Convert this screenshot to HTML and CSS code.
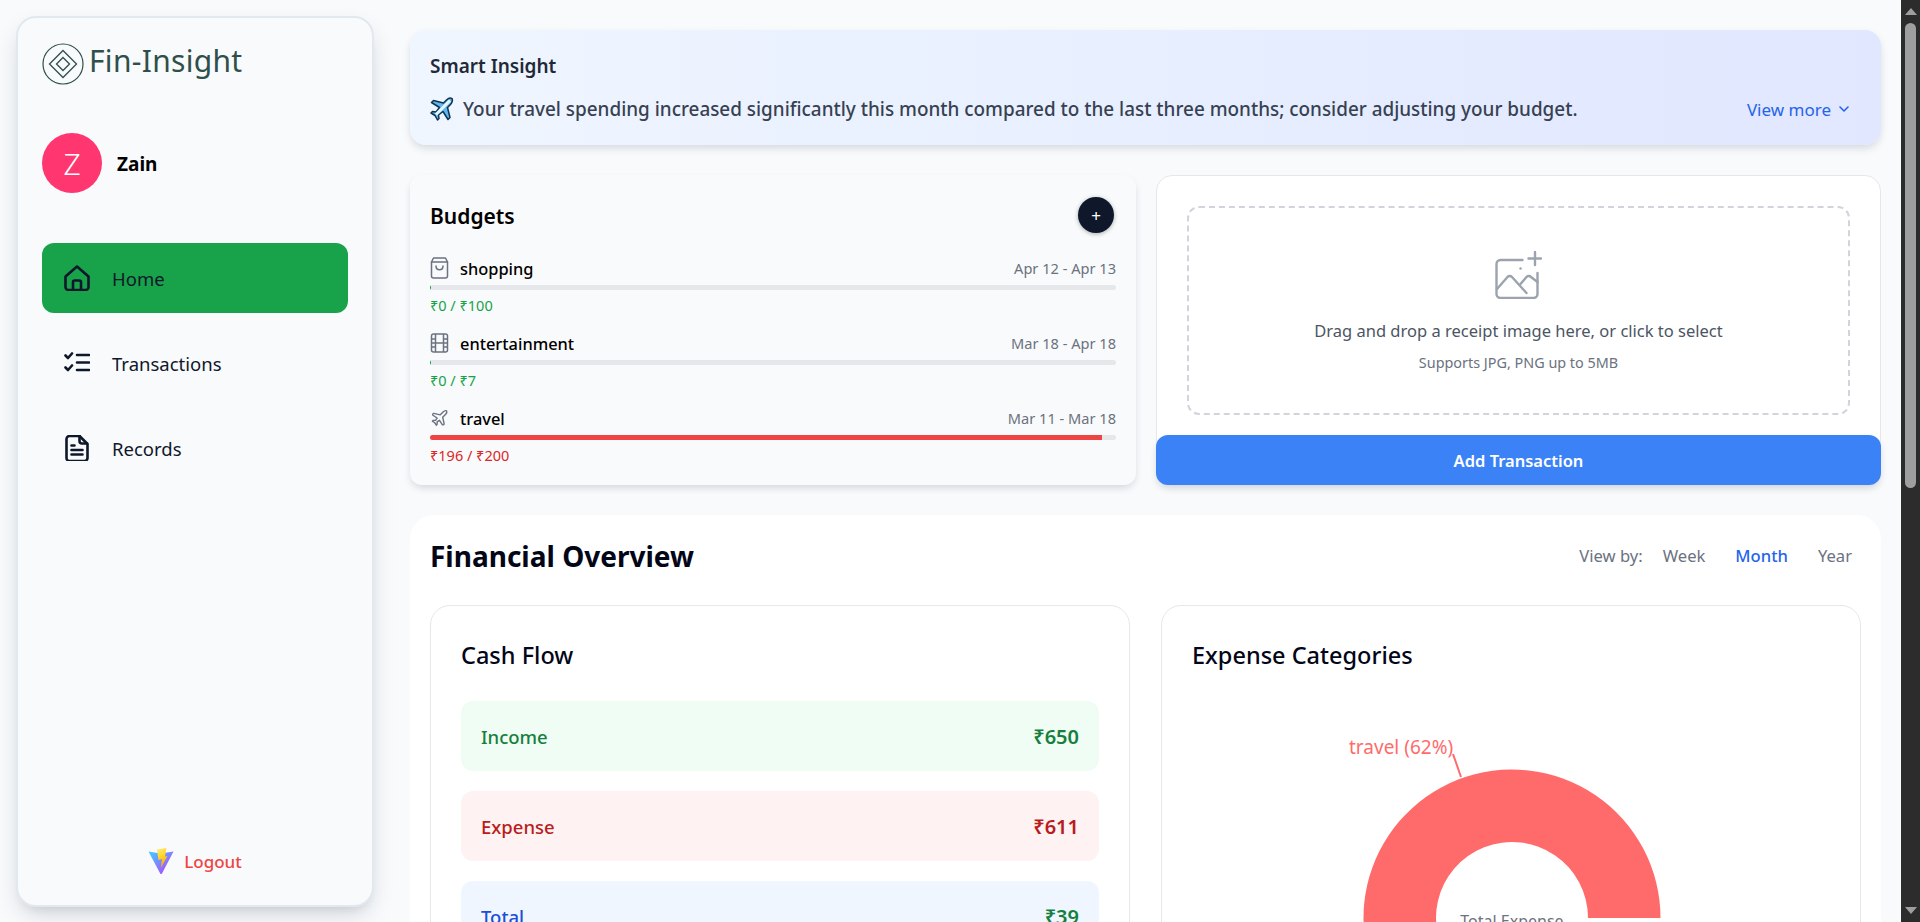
FILE: index.html
```html
<!DOCTYPE html>
<html lang="en">
<head>
    <meta charset="UTF-8">
    <meta name="viewport" content="width=device-width, initial-scale=1.0">
    <title>Fin-Insight</title>
    <link rel="stylesheet" href="styles.css">
</head>
<body>
    <aside class="sidebar">
        <div class="brand">
            <svg class="brand-mark" viewBox="0 0 42 42" fill="none" stroke="#2f4f4a">
                <circle cx="21" cy="21" r="20" stroke-width="1.2"/>
                <path d="M21 7.5 34.5 21 21 34.5 7.5 21Z" stroke-width="1.3"/>
                <path d="M21 14.5 27.5 21 21 27.5 14.5 21Z" stroke-width="1.3"/>
            </svg>
            <span class="brand-name">Fin-Insight</span>
        </div>

        <div class="profile">
            <div class="avatar">Z</div>
            <span class="profile-name">Zain</span>
        </div>

        <nav class="nav">
            <a class="nav-item active">
                <svg class="nav-icon" viewBox="0 0 26 26" fill="none" stroke="#0f172a" stroke-width="2.6" stroke-linejoin="round" stroke-linecap="round">
                    <path d="M1.5 11.5 13 1.5l11.500 10v10.500a3 3 0 0 1-3 3h-17a3 3 0 0 1-3-3Z"/>
                    <path d="M9 25v-8a1.500 1.500 0 0 1 1.500-1.500h5A1.500 1.500 0 0 1 17 17v8"/>
                </svg>
                <span>Home</span>
            </a>
            <a class="nav-item">
                <svg class="nav-icon" viewBox="0 0 26 26" fill="none" stroke="#0f172a" stroke-width="2.6" stroke-linecap="round" stroke-linejoin="round">
                    <path d="M1.500 5.500 4 8l4-4.500"/>
                    <path d="M1.500 17.500 4 20l4-4.500"/>
                    <path d="M13 5h12M13 12.500h12M13 20h12"/>
                </svg>
                <span>Transactions</span>
            </a>
            <a class="nav-item">
                <svg class="nav-icon" viewBox="0 0 26 26" fill="none" stroke="#0f172a" stroke-width="2.6" stroke-linecap="round" stroke-linejoin="round">
                    <path d="M5.500 0.500h10l8 8v14a3 3 0 0 1-3 3h-15a3 3 0 0 1-3-3v-19a3 3 0 0 1 3-3Z" transform="translate(0 0.500)"/>
                    <path d="M15.500 1v5a2.500 2.500 0 0 0 2.500 2.500h5"/>
                    <path d="M7.500 10.500h3M7.500 15h11M7.500 19.500h11"/>
                </svg>
                <span>Records</span>
            </a>
        </nav>

        <a class="logout">
            <svg class="logout-icon" viewBox="0 0 26 26">
                <defs>
                    <linearGradient id="viteBody" x1="0" y1="0" x2="1" y2="1">
                        <stop offset="0" stop-color="#41d1ff"/>
                        <stop offset="1" stop-color="#bd34fe"/>
                    </linearGradient>
                    <linearGradient id="viteBolt" x1="0" y1="0" x2="0.3" y2="1">
                        <stop offset="0" stop-color="#ffea83"/>
                        <stop offset="0.4" stop-color="#ffdd35"/>
                        <stop offset="1" stop-color="#ffa800"/>
                    </linearGradient>
                </defs>
                <path d="M0.500 3.500 12.500 5.500 25.500 3.500 14 25.500a1 1 0 0 1-1.800 0Z" fill="url(#viteBody)"/>
                <path d="M9 1.500 18.500 0 17 8.500 19.500 8 12.800 20 14 11 10.500 12Z" fill="url(#viteBolt)"/>
            </svg>
            <span>Logout</span>
        </a>
    </aside>

    <main class="content">
        <section class="insight">
            <h3 class="insight-title">Smart Insight</h3>
            <div class="insight-row">
                <svg class="insight-emoji" viewBox="0 0 24 24">
                    <path d="M22 1.500c-1.500-1-4 0-5.500 1.500L13.500 6 3.500 3.500 1.500 5.500 9.500 10.500 6 15 2.500 14.500 1 16l4 2.500L7.500 23 9 21.500 8.500 18l4.500-3.500 5 8 2-2L17.500 10.500l3-3C22 6 23 3 22 1.500Z" fill="#5db7ee" stroke="#11334f" stroke-width="1.500" stroke-linejoin="round"/>
                    <path d="M20 3.500 6 17.500" stroke="#eaf6ff" stroke-width="3"/>
                </svg>
                <p class="insight-text">Your travel spending increased significantly this month compared to the last three months; consider adjusting your budget.</p>
                <a class="view-more">View more
                    <svg class="view-more-icon" viewBox="0 0 12 12" fill="none" stroke="#2563eb" stroke-width="1.600" stroke-linecap="round" stroke-linejoin="round"><path d="M2 4l4 4 4-4"/></svg>
                </a>
            </div>
        </section>

        <div class="top-grid">
            <section class="budgets">
                <div class="budgets-head">
                    <h3 class="budgets-title">Budgets</h3>
                    <button class="add-budget">+</button>
                </div>

                <div class="budget">
                    <div class="budget-row">
                        <svg class="budget-icon" viewBox="0 0 18 22" fill="none" stroke="#6b7280" stroke-width="1.500" stroke-linecap="round" stroke-linejoin="round">
                            <path d="M3 1h12l2 4v14a2 2 0 0 1-2 2H3a2 2 0 0 1-2-2V5Z"/>
                            <path d="M1 5h16"/>
                            <path d="M5.500 9c0 5 7 5 7 0"/>
                        </svg>
                        <span class="budget-name">shopping</span>
                        <span class="budget-date">Apr 12 - Apr 13</span>
                    </div>
                    <div class="bar"><div class="bar-fill green" style="width: 0.2%"></div></div>
                    <p class="budget-money green-text">₹0 / ₹100</p>
                </div>

                <div class="budget">
                    <div class="budget-row">
                        <svg class="budget-icon" viewBox="0 0 18 22" fill="none" stroke="#6b7280" stroke-width="1.500" stroke-linejoin="round">
                            <rect x="1" y="2" width="16" height="18" rx="2"/>
                            <path d="M5 2v18M13 2v18M1 7h4M1 11h16M1 15h4M13 7h4M13 15h4"/>
                        </svg>
                        <span class="budget-name">entertainment</span>
                        <span class="budget-date">Mar 18 - Apr 18</span>
                    </div>
                    <div class="bar"><div class="bar-fill green" style="width: 0.2%"></div></div>
                    <p class="budget-money green-text">₹0 / ₹7</p>
                </div>

                <div class="budget">
                    <div class="budget-row">
                        <svg class="budget-icon" viewBox="0 0 24 24" fill="none" stroke="#6b7280" stroke-width="1.800" stroke-linecap="round" stroke-linejoin="round">
                            <path d="M17.800 19.200 16 11l3.500-3.500C21 6 21.500 4 21 3c-1-.5-3 0-4.500 1.500L13 8 4.800 6.200c-.5-.1-.9.100-1.100.5l-.3.5c-.2.5-.1 1 .3 1.300L9 12l-2 3H4l-1 1 3 2 2 3 1-1v-3l3-2 3.500 5.300c.3.400.8.500 1.300.3l.5-.2c.4-.3.6-.7.5-1.200z"/>
                        </svg>
                        <span class="budget-name">travel</span>
                        <span class="budget-date">Mar 11 - Mar 18</span>
                    </div>
                    <div class="bar"><div class="bar-fill red" style="width: 98%"></div></div>
                    <p class="budget-money red-text">₹196 / ₹200</p>
                </div>
            </section>

            <section class="upload">
                <div class="dropzone">
                    <svg class="dropzone-icon" viewBox="0 0 46 48" fill="none" stroke="#9ca3af" stroke-width="2.400" stroke-linecap="round" stroke-linejoin="round">
                        <path d="M27 9H5a4 4 0 0 0-4 4v30a4 4 0 0 0 4 4h33a4 4 0 0 0 4-4V22"/>
                        <path d="M1.500 38 12 26a3 3 0 0 1 4.500 0L31 42"/>
                        <path d="M25 33l6-7a3 3 0 0 1 4.500 0L42 31"/>
                        <path d="M39.500 1v13M33 7.500h12.500"/>
                        <path d="M25 17.500h.1"/>
                    </svg>
                    <p class="dropzone-text">Drag and drop a receipt image here, or click to select</p>
                    <p class="dropzone-note">Supports JPG, PNG up to 5MB</p>
                </div>
                <button class="add-transaction">Add Transaction</button>
            </section>
        </div>

        <section class="overview">
            <div class="overview-head">
                <h2 class="overview-title">Financial Overview</h2>
                <div class="view-by">
                    <span class="view-label">View by:</span>
                    <button class="view-btn">Week</button>
                    <button class="view-btn selected">Month</button>
                    <button class="view-btn">Year</button>
                </div>
            </div>

            <div class="overview-grid">
                <div class="panel">
                    <h3 class="panel-title">Cash Flow</h3>
                    <div class="flow-list">
                        <div class="flow income"><span>Income</span><strong>₹650</strong></div>
                        <div class="flow expense"><span>Expense</span><strong>₹611</strong></div>
                        <div class="flow total"><span>Total</span><strong>₹39</strong></div>
                    </div>
                </div>

                <div class="panel">
                    <h3 class="panel-title">Expense Categories</h3>
                    <svg class="donut" viewBox="0 0 638 440">
                        <path d="M468.500 217A148.500 148.500 0 1 0 211.400 318.300L264.400 268.800A76 76 0 1 1 396 217Z" fill="#ff6b6b"/>
                        <path d="M261 53 269 76" stroke="#ff6b6b" stroke-width="2" fill="none"/>
                        <text class="donut-label" x="157" y="53">travel (62%)</text>
                        <text class="donut-center" x="320" y="226" text-anchor="middle">Total Expense</text>
                        <text class="donut-value" x="320" y="252" text-anchor="middle">₹611</text>
                    </svg>
                </div>
            </div>
        </section>
    </main>

    <div class="scrollbar">
        <span class="scroll-up"></span>
        <span class="scroll-thumb"></span>
        <span class="scroll-down"></span>
    </div>
</body>
</html>
```

FILE: styles.css
```css
* {
    box-sizing: border-box;
}

html {
    background: #f8fafc;
}

body {
    margin: 0;
    padding-right: 19px;
    display: flex;
    align-items: flex-start;
    font-family: "Noto Sans", sans-serif;
    color: #0f172a;
    background: #f8fafc;
}

/* browser scrollbar, the headless window does not paint one */
.scrollbar {
    position: fixed;
    top: 0;
    right: 0;
    bottom: 0;
    width: 19px;
    display: flex;
    flex-direction: column;
    align-items: center;
    background: #2c2c2c;
}

.scroll-up {
    margin-top: 8px;
    border-left: 6px solid transparent;
    border-right: 6px solid transparent;
    border-bottom: 7px solid #9f9f9f;
}

.scroll-thumb {
    width: 11px;
    height: 465px;
    margin-top: 8px;
    border-radius: 6px;
    background: #9f9f9f;
}

.scroll-down {
    margin-top: auto;
    margin-bottom: 8px;
    border-left: 6px solid transparent;
    border-right: 6px solid transparent;
    border-top: 7px solid #9f9f9f;
}

/* sidebar */
.sidebar {
    position: sticky;
    top: 16px;
    flex: 0 0 358px;
    height: 891px;
    margin: 16px 0 0 16px;
    padding: 25px 24px 24px;
    display: flex;
    flex-direction: column;
    background: #f8fafc;
    border: 2px solid #e2e8f0;
    border-radius: 20px;
    box-shadow: 0 10px 25px -5px rgba(15, 23, 42, 0.18), 0 8px 10px -6px rgba(15, 23, 42, 0.08);
}

.brand {
    display: flex;
    align-items: center;
    gap: 5px;
}

.brand-mark {
    width: 42px;
    height: 42px;
}

.brand-name {
    padding-bottom: 6px;
    font-size: 30px;
    line-height: 36px;
    letter-spacing: 0.3px;
    color: #2f4f4a;
}

.profile {
    display: flex;
    align-items: center;
    gap: 15px;
    margin-top: 48px;
}

.avatar {
    width: 60px;
    height: 60px;
    display: flex;
    align-items: center;
    justify-content: center;
    border-radius: 50%;
    background: #ff3670;
    color: #fff;
    font-size: 30px;
    font-weight: 300;
}

.profile-name {
    padding-top: 2px;
    font-size: 19px;
    font-weight: 700;
    color: #000;
}

.nav {
    display: flex;
    flex-direction: column;
    gap: 15px;
    margin-top: 50px;
}

.nav-item {
    height: 70px;
    display: flex;
    align-items: center;
    gap: 22px;
    padding: 0 22px;
    border-radius: 12px;
    font-size: 18.5px;
    color: #0f172a;
}

.nav-item.active {
    background: #18a34b;
}

.nav-icon {
    width: 26px;
    height: 26px;
}

.logout {
    margin-top: auto;
    margin-bottom: 7px;
    display: flex;
    align-items: center;
    justify-content: center;
    gap: 10px;
    font-size: 17px;
    font-weight: 500;
    color: #ef4444;
}

.logout-icon {
    width: 26px;
    height: 26px;
}

/* main column */
.content {
    flex: 1;
    min-width: 0;
    margin-left: 36px;
    padding: 30px 20px 30px 0;
    display: flex;
    flex-direction: column;
    gap: 30px;
}

.insight {
    height: 115px;
    padding: 23px 31px 0 20px;
    border-radius: 16px;
    background: linear-gradient(90deg, #eff6ff, #e0e7ff);
    box-shadow: 0 4px 10px -2px rgba(15, 23, 42, 0.18);
}

.insight-title {
    margin: 0;
    font-size: 19px;
    line-height: 26px;
    font-weight: 600;
    color: #1f2937;
}

.insight-row {
    display: flex;
    align-items: center;
    margin-top: 17px;
}

.insight-emoji {
    width: 24px;
    height: 24px;
    margin-right: 9px;
}

.insight-text {
    margin: 0;
    flex: 1;
    font-size: 18.9px;
    font-weight: 500;
    color: #374151;
}

.view-more {
    display: flex;
    align-items: center;
    gap: 7px;
    font-size: 17px;
    color: #2563eb;
}

.view-more-icon {
    width: 12px;
    height: 12px;
}

.top-grid {
    display: grid;
    grid-template-columns: 726px 725px;
    gap: 20px;
}

.budgets {
    height: 310px;
    padding: 21px 20px 0;
    background: #f9fafb;
    border-radius: 12px;
    box-shadow: 0 4px 8px -2px rgba(15, 23, 42, 0.18);
}

.budgets-head {
    display: flex;
    align-items: center;
    justify-content: space-between;
    height: 40px;
    margin-bottom: 20px;
}

.budgets-title {
    margin: 0;
    font-size: 21px;
    font-weight: 600;
    color: #000;
}

.add-budget {
    width: 36px;
    height: 36px;
    margin: -2px 2px 0 0;
    padding: 0;
    border: none;
    border-radius: 50%;
    background: #0f172a;
    color: #fff;
    font-family: inherit;
    font-size: 17px;
    box-shadow: 0 1px 4px rgba(15, 23, 42, 0.35);
}

.budget {
    height: 75px;
}

.budget-row {
    height: 24px;
    display: flex;
    align-items: center;
    gap: 11px;
}

.budget-icon {
    width: 19px;
    height: 22px;
}

.budget-name {
    flex: 1;
    font-size: 16.4px;
    font-weight: 500;
    color: #000;
}

.budget-date {
    font-size: 14.6px;
    color: #6b7280;
}

.bar {
    height: 5px;
    margin-top: 5px;
    border-radius: 3px;
    background: #e5e7eb;
    overflow: hidden;
}

.bar-fill {
    height: 100%;
}

.bar-fill.green {
    background: #16a34a;
}

.bar-fill.red {
    background: #ef4444;
}

.budget-money {
    margin: 5px 0 0;
    font-size: 14.5px;
    line-height: 20px;
}

.green-text {
    color: #16a34a;
}

.red-text {
    color: #dc2626;
}

.upload {
    height: 310px;
    padding: 30px 30px 0;
    position: relative;
    background: #fff;
    border: 1px solid #e5e7eb;
    border-radius: 16px;
}

.dropzone {
    height: 209px;
    padding-top: 43px;
    display: flex;
    flex-direction: column;
    align-items: center;
    border: 2px dashed #d1d5db;
    border-radius: 12px;
}

.dropzone-icon {
    width: 47px;
    height: 48px;
}

.dropzone-text {
    margin: 20px 0 0;
    font-size: 16.5px;
    line-height: 24px;
    color: #4b5563;
}

.dropzone-note {
    margin: 10px 0 0;
    font-size: 14.4px;
    line-height: 20px;
    color: #6b7280;
}

/* sits over the bottom edge of the card */
.add-transaction {
    position: absolute;
    left: -1px;
    right: -1px;
    bottom: -1px;
    height: 50px;
    border: none;
    border-radius: 12px;
    background: #3b82f6;
    color: #fff;
    font-family: inherit;
    font-size: 16.5px;
    font-weight: 600;
    box-shadow: 0 4px 8px -2px rgba(15, 23, 42, 0.2);
}

.overview {
    padding: 0 20px 21px;
    background: #fff;
    border-radius: 24px;
}

.overview-head {
    height: 90px;
    padding-bottom: 9px;
    display: flex;
    align-items: center;
    justify-content: space-between;
}

.overview-title {
    margin: 0;
    font-size: 28px;
    font-weight: 700;
    color: #020617;
}

.view-by {
    display: flex;
    align-items: center;
    gap: 30px;
    margin-right: 9px;
    font-size: 16.6px;
    color: #6b7280;
}

.view-label {
    margin-right: -10px;
}

.view-btn {
    padding: 0;
    border: none;
    background: none;
    font: inherit;
    color: #6b7280;
}

.view-btn.selected {
    font-weight: 500;
    color: #2563eb;
}

.overview-grid {
    display: grid;
    grid-template-columns: 700px 700px;
    gap: 31px;
    min-height: 1096px;
}

.panel {
    padding: 30px;
    border: 1px solid #e5e7eb;
    border-radius: 20px;
}

.panel-title {
    margin: 0 0 27px;
    font-size: 23.5px;
    line-height: 38px;
    font-weight: 500;
    color: #020617;
}

.flow-list {
    display: flex;
    flex-direction: column;
    gap: 20px;
}

.flow {
    height: 70px;
    padding: 0 20px;
    display: flex;
    align-items: center;
    justify-content: space-between;
    border-radius: 12px;
    font-size: 18.5px;
    font-weight: 500;
}

.flow strong {
    font-size: 20px;
    font-weight: 600;
}

.income {
    background: #f0fdf4;
    color: #15803d;
}

.expense {
    background: #fef2f2;
    color: #b91c1c;
}

.total {
    background: #eff6ff;
    color: #1d4ed8;
}

.total strong {
    color: #15803d;
}

.donut {
    display: block;
    width: 638px;
    height: 440px;
}

.donut-label {
    font-family: "Noto Sans", sans-serif;
    font-size: 19px;
    fill: #ff6b6b;
}

.donut-center {
    font-family: "Noto Sans", sans-serif;
    font-size: 16px;
    fill: #6b7280;
}

.donut-value {
    font-family: "Noto Sans", sans-serif;
    font-size: 20px;
    font-weight: 600;
    fill: #0f172a;
}
```
